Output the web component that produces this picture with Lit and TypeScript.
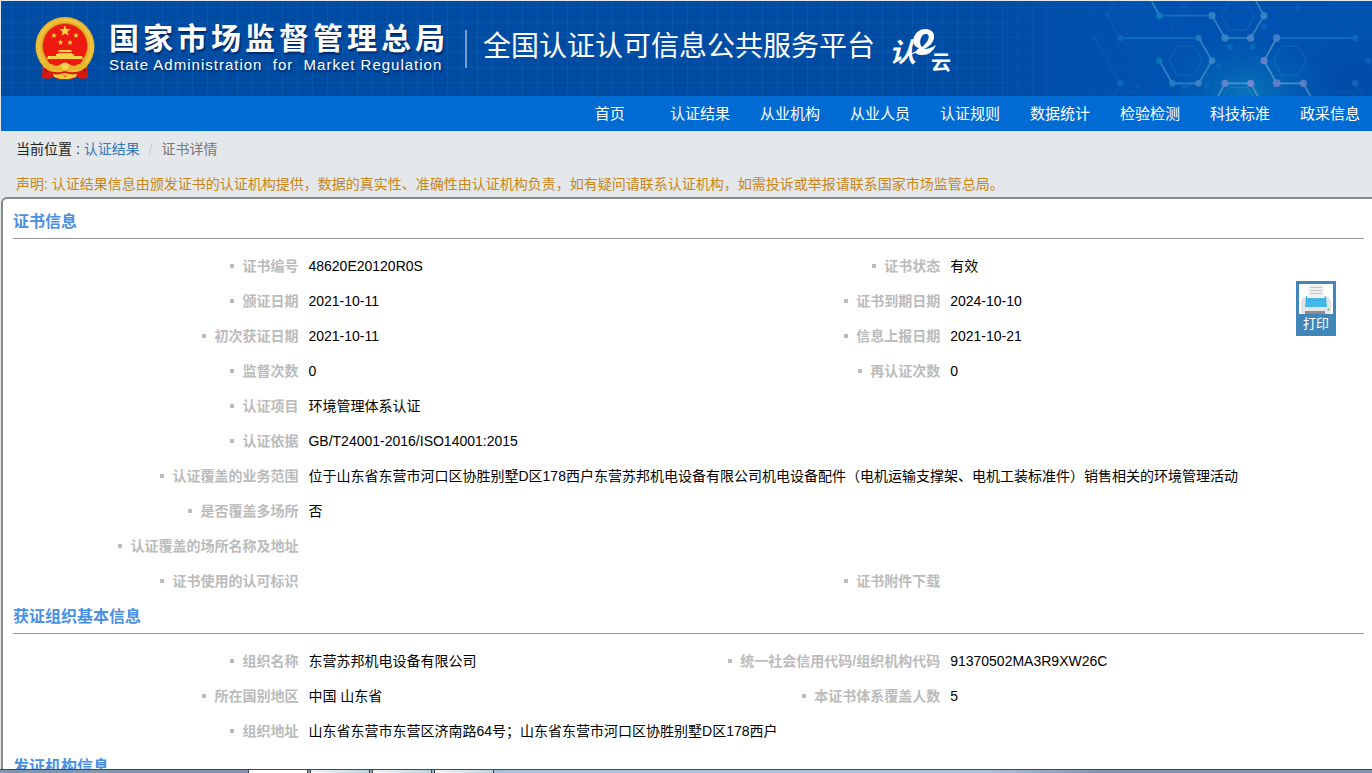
import { LitElement, html, css, svg, nothing } from "lit";
import { customElement, property } from "lit/decorators.js";

type Field = { label: string; value: string };
type Row = Field[];

const CERTIFICATE: Row[] = [
  [{ label: "证书编号", value: "48620E20120R0S" }, { label: "证书状态", value: "有效" }],
  [{ label: "颁证日期", value: "2021-10-11" }, { label: "证书到期日期", value: "2024-10-10" }],
  [{ label: "初次获证日期", value: "2021-10-11" }, { label: "信息上报日期", value: "2021-10-21" }],
  [{ label: "监督次数", value: "0" }, { label: "再认证次数", value: "0" }],
  [{ label: "认证项目", value: "环境管理体系认证" }],
  [{ label: "认证依据", value: "GB/T24001-2016/ISO14001:2015" }],
  [{ label: "认证覆盖的业务范围", value: "位于山东省东营市河口区协胜别墅D区178西户东营苏邦机电设备有限公司机电设备配件（电机运输支撑架、电机工装标准件）销售相关的环境管理活动" }],
  [{ label: "是否覆盖多场所", value: "否" }],
  [{ label: "认证覆盖的场所名称及地址", value: "" }],
  [{ label: "证书使用的认可标识", value: "" }, { label: "证书附件下载", value: "" }],
];

const ORGANISATION: Row[] = [
  [{ label: "组织名称", value: "东营苏邦机电设备有限公司" }, { label: "统一社会信用代码/组织机构代码", value: "91370502MA3R9XW26C" }],
  [{ label: "所在国别地区", value: "中国 山东省" }, { label: "本证书体系覆盖人数", value: "5" }],
  [{ label: "组织地址", value: "山东省东营市东营区济南路64号；山东省东营市河口区协胜别墅D区178西户" }],
];

const NAV = ["首页", "认证结果", "从业机构", "从业人员", "认证规则", "数据统计", "检验检测", "科技标准", "政采信息"];

const star = (cx: number, cy: number, r: number) => {
  const pts: string[] = [];
  for (let i = 0; i < 10; i++) {
    const a = (Math.PI / 5) * i - Math.PI / 2;
    const k = i % 2 ? r * 0.4 : r;
    pts.push(`${(cx + k * Math.cos(a)).toFixed(2)},${(cy + k * Math.sin(a)).toFixed(2)}`);
  }
  return svg`<polygon points=${pts.join(" ")} fill="#fbd93a"></polygon>`;
};

@customElement("site-header")
export class SiteHeader extends LitElement {
  static styles = css`
    :host { display: block; }
    .banner {
      position: relative;
      height: 95px;
      display: flex;
      align-items: center;
      color: #fff;
      overflow: hidden;
      background:
        repeating-linear-gradient(90deg, transparent 0 11px, rgba(20, 112, 205, .25) 11px 12px, transparent 12px 15px),
        repeating-linear-gradient(180deg, transparent 0 6px, rgba(20, 112, 205, .25) 6px 7px, transparent 7px 15px),
        #004ca3;
    }
    .network { position: absolute; right: 0; top: 0; width: 392px; height: 95px; }
    .emblem { width: 60px; height: 64px; margin-left: 34px; flex: none; }
    .agency { margin-left: 14px; padding-bottom: 4px; text-shadow: 1px 2px 2px rgba(0, 20, 70, .7); flex: none; }
    .agency-cn { margin: 0; font-size: 30px; line-height: 36px; font-weight: 700; letter-spacing: 4px; white-space: nowrap; }
    .agency-en { margin: 0; font-size: 15px; line-height: 16px; letter-spacing: 1px; white-space: pre; }
    .divider { width: 2px; height: 38px; margin: 0 16px; background: #6f9fd0; flex: none; }
    .platform { margin: 0; padding-bottom: 4px; font-size: 28px; line-height: 40px; font-weight: 400; white-space: nowrap; }
    .cloud { width: 64px; height: 46px; margin: 6px 0 0 14px; flex: none; }
    .cloud text { font-family: "Noto Sans CJK SC", sans-serif; font-weight: 700; fill: #fff; }
    .nav { background: #006cd3; }
    .nav-list {
      display: flex; justify-content: flex-end; gap: 30px;
      margin: 0; padding: 1px 12px 0 0; list-style: none;
    }
    .nav-link {
      display: block; min-width: 60px; text-align: center; white-space: nowrap;
      font-size: 15px; line-height: 34px; color: #fff; text-decoration: none;
    }
  `;

  private network() {
    const nodes: [number, number, number, string][] = [
      [538, 44, 10, "#147cc0"], [696, 44, 11, "#3387c0"], [852, 44, 11, "#3b87c4"],
      [421, 111, 10, "#0a69bd"], [656, 111, 10, "#1c80c0"], [735, 111, 11, "#3a88c4"],
      [812, 111, 11, "#5385c8"], [890, 111, 11, "#4a84c8"], [1126, 111, 10, "#1468c0"],
      [538, 179, 10, "#087abc"], [696, 179, 10, "#4286c4"], [852, 179, 11, "#7084ca"],
      [421, 247, 10, "#0a69bd"], [577, 247, 10, "#267fc0"], [656, 247, 10, "#4684c4"],
      [735, 247, 11, "#6c86c8"], [812, 247, 11, "#8088cc"], [890, 247, 12, "#6b7fcc"],
      [970, 247, 11, "#6682c4"], [1126, 247, 10, "#1468c0"], [383, 44, 9, "#075abb"],
      [344, 111, 9, "#0757b5"], [1165, 179, 9, "#0b62bf"], [612, 16, 8, "#0759b5"],
      [955, 20, 9, "#075bb8"], [750, 138, 9, "#0a6abb"], [818, 138, 9, "#0a6abb"],
      [716, 196, 9, "#0a6abb"], [681, 255, 9, "#0a67b9"], [614, 255, 9, "#0a67b9"],
      [852, 78, 9, "#0a62b9"], [476, 255, 8, "#0859b2"], [578, 78, 8, "#0757b3"],
    ];
    const hex = (x: number, y: number, r: number, o: number) => {
      const p = [0, 1, 2, 3, 4, 5].map((i) =>
        `${(x + r * Math.cos((i * Math.PI) / 3)).toFixed(1)},${(y + r * Math.sin((i * Math.PI) / 3)).toFixed(1)}`);
      return svg`<polygon points=${p.join(" ")} stroke="#3fa9d8" stroke-opacity=${o} stroke-width="3"></polygon>`;
    };
    return svg`
      <defs>
        <linearGradient id="fade"><stop offset="0" stop-color="#0052b0" stop-opacity="0"/><stop offset=".4" stop-color="#0052b0"/></linearGradient>
        <radialGradient id="glow"><stop offset="0" stop-color="#0874b8"/><stop offset="1" stop-color="#0060b4" stop-opacity="0"/></radialGradient>
        <radialGradient id="shade"><stop offset="0" stop-color="#00479c"/><stop offset="1" stop-color="#00479c" stop-opacity="0"/></radialGradient>
      </defs>
      <rect width="1176" height="285" fill="url(#fade)"/>
      <ellipse cx="1130" cy="240" rx="170" ry="140" fill="url(#shade)" opacity=".5"/>
      <ellipse cx="800" cy="270" rx="250" ry="170" fill="url(#glow)"/>
      <g fill="none">
        ${hex(774, 44, 50, .22)}${hex(617, 179, 50, .22)}${hex(930, 179, 50, .25)}
        ${hex(774, 312, 60, .3)}${hex(1085, 44, 50, .1)}${hex(460, 44, 50, .08)}${hex(460, 315, 50, .12)}${hex(1095, 315, 50, .12)}
        <path d="M538 44H696 M421 111H656 M890 111H1126" stroke="#2292cc" stroke-opacity=".5" stroke-width="5"/>
        <path d="M515 0L538 44 M696 44L735 111H812L852 44L828 0 M656 111L696 179L656 247H577L538 179" stroke="#4aa6cc" stroke-opacity=".6" stroke-width="5"/>
        <path d="M890 111L852 179L890 247H970L994 290 M712 290L735 247H812L836 290" stroke="#74b0d0" stroke-opacity=".6" stroke-width="5"/>
        <path d="M400 0L383 44L421 111 M344 111L421 247L400 285 M1126 247L1150 290" stroke="#1b74c8" stroke-opacity=".4" stroke-width="3"/>
      </g>
      ${nodes.map(([x, y, r, c]) => svg`<circle cx=${x} cy=${y} r=${r} fill=${c} fill-opacity=".85"></circle>`)}`;
  }

  render() {
    return html`
      <header>
        <div class="banner">
          <svg class="network" viewBox="0 0 1176 285" preserveAspectRatio="none" aria-hidden="true">${this.network()}</svg>
          <svg class="emblem" viewBox="0 0 60 64" role="img" aria-label="国徽">
            <path d="M8 44L7 61L14 62L19 59L23 63H37L41 59L46 62L53 61L52 44Z" fill="#d8180f"/>
            <path d="M10 50L13 60M16 51L18 59M44 52L42 59M50 49L48 59" stroke="#8f0d0a" stroke-width="1.5"/>
            <circle cx="30" cy="29.500" r="29.500" fill="#e9b52c"/>
            <circle cx="30" cy="29.500" r="26.500" fill="none" stroke="#f3c846" stroke-width="2.500" stroke-dasharray="2 1"/>
            <circle cx="30" cy="29" r="22.500" fill="#ee1a12" stroke="#c98a18" stroke-width="1"/>
            ${star(30, 14, 6)}${star(19, 18.5, 3)}${star(41, 18.5, 3)}${star(25.5, 25.5, 3)}${star(35, 25.5, 3)}
            <path d="M24 33H36L37 35H23Z M23 36H37V37H39V39H21V37H23Z" fill="#fbd33c"/>
            <path d="M13 39H47L48 42H12Z" fill="#f7d144"/>
            <path d="M12 43H48L45 47H15Z" fill="#ee1a12"/>
            <path d="M9 45Q17 51 24 48Q30 44 36 48Q43 51 51 45L52 50Q42 55 36 52L30 55L24 52Q18 55 8 50Z" fill="#e9b52c"/>
            <circle cx="30" cy="49" r="3.500" fill="#f8d558"/>
            <path d="M12 53Q21 57 30 54Q39 57 48 53L51 60L43 61Q39 57 30 56Q21 57 17 61L9 60Z" fill="#d8180f"/>
            <path d="M18 57L27 58L30 60L33 58L42 57L41 60L34 62H26L19 60Z" fill="#f3ca3e"/>
          </svg>
          <div class="agency">
            <p class="agency-cn">国家市场监督管理总局</p>
            <p class="agency-en">State Administration  for  Market Regulation</p>
          </div>
          <span class="divider"></span>
          <h1 class="platform">全国认证认可信息公共服务平台</h1>
          <svg class="cloud" viewBox="0 0 64 46" role="img" aria-label="认e云">
            <text x="0" y="33" font-size="27" font-style="italic">认</text>
            <path fill-rule="evenodd" d="M36 0C44 0 47 6 44 12C42 16 39 18 35 20Q41 20 47 16Q43 26 33 26Q28 26 27 24L20 26Q24 24 27 22L30 19C25 18 23 13 25 8C27 3 31 0 36 0ZM36 5C32 6 30 12 32 17C33 18 34 18 35 16C40 12 42 4 36 5Z" fill="#fff"/>
            <text x="42" y="41" font-size="20">云</text>
          </svg>
        </div>
        <nav class="nav" aria-label="主导航">
          <ul class="nav-list">
            ${NAV.map((n) => html`<li><a class="nav-link" href="#">${n}</a></li>`)}
          </ul>
        </nav>
      </header>`;
  }
}

@customElement("info-section")
export class InfoSection extends LitElement {
  static styles = css`
    :host { display: block; }
    .title {
      margin: 0; padding-top: 2px; font-size: 16px; line-height: 32px; font-weight: 700; color: #4a90e2;
      border-bottom: 1px solid #999;
    }
    .table {
      width: 100%; margin-top: 10px; table-layout: fixed; border-collapse: collapse;
      font-size: 14px; line-height: 25px; color: #000;
    }
    .col-label { width: 21.5%; }
    .col-value { width: 26%; }
    .label, .value { height: 25px; padding: 5px; vertical-align: top; white-space: nowrap; }
    .label { text-align: right; font-weight: 700; color: #bbb; }
    .label::before {
      content: ""; display: inline-block; width: 4px; height: 4px;
      margin: 0 8px 2px 0; vertical-align: middle; background: #bbb;
    }
    .value { text-align: left; }
    .wide { white-space: normal; }
  `;

  @property() heading = "";
  @property({ attribute: false }) rows: Row[] = [];

  render() {
    return html`
      <section>
        <h2 class="title">${this.heading}</h2>
        ${this.rows.length
          ? html`<table class="table">
              <colgroup><col class="col-label" /><col class="col-value" /><col class="col-label" /><col /></colgroup>
              <tbody>
                ${this.rows.map((row) => html`<tr>
                  ${row.map((f) => html`<th class="label" scope="row">${f.label}</th>
                    <td class="value ${row.length === 1 ? "wide" : ""}" colspan=${row.length === 1 ? 3 : 1}>${f.value}</td>`)}
                </tr>`)}
              </tbody>
            </table>`
          : nothing}
      </section>`;
  }
}

@customElement("app-root")
export class AppRoot extends LitElement {
  static styles = css`
    :host {
      display: flex; flex-direction: column; height: 100vh; overflow: hidden;
      background: #e4e8eb;
      font-family: "Liberation Sans", "Noto Sans CJK SC", sans-serif;
    }
    .page { flex: 1; min-height: 0; overflow: hidden; padding: 1px 0 0 1px; }
    .crumbs { padding: 0 15px; font-size: 14px; line-height: 36px; color: #222; }
    .crumb-link { color: #337ab7; text-decoration: none; }
    .slash { padding: 0 9px; color: #ccc; }
    .current { color: #777; }
    .notice { margin: 0; padding: 4px 15px 0; font-size: 14px; line-height: 26px; color: #c7861a; }
    .panel {
      position: relative; padding: 5px 8px 40px 10px; background: #fff;
      border: 2px solid #888; border-right: 0; border-radius: 6px 0 0 0;
    }
    .print {
      position: absolute; top: 82px; right: 36px; width: 40px; padding: 3px; border: 0;
      background: #4086b9; color: #fff; font: inherit; font-size: 13px; line-height: 19px; cursor: pointer;
    }
    .printer { display: block; width: 34px; height: 30px; background: #fff; }
    .taskbar {
      flex: none; height: 4px; box-sizing: border-box; display: flex; gap: 2px; padding-left: 248px;
      border-top: 1px solid #3c4a52;
      background: linear-gradient(90deg, #7f96b0 0 20%, #a6c3de 37% 72%, #7f96b0 80%);
    }
    .task {
      width: 60px; box-sizing: border-box; border: 1px solid #33444f; border-width: 0 1px;
      background: linear-gradient(90deg, #f0f6fa, #bdd3e2);
    }
    .task:first-child { background: #fdfdfd; }
  `;

  render() {
    return html`
      <div class="page">
        <site-header></site-header>
        <div class="crumbs">当前位置 : <a class="crumb-link" href="#">认证结果</a><span class="slash">/</span><span class="current">证书详情</span></div>
        <p class="notice">声明: 认证结果信息由颁发证书的认证机构提供，数据的真实性、准确性由认证机构负责，如有疑问请联系认证机构，如需投诉或举报请联系国家市场监管总局。</p>
        <main class="panel">
          <info-section heading="证书信息" .rows=${CERTIFICATE}></info-section>
          <info-section heading="获证组织基本信息" .rows=${ORGANISATION}></info-section>
          <info-section heading="发证机构信息"></info-section>
          <button class="print" type="button">
            <svg class="printer" viewBox="0 0 34 30" aria-hidden="true">
              <path d="M4 13H30L32 18V27Q32 30 29 30H5Q2 30 2 27V18Z" fill="#e3e4e5"/>
              <path d="M7 12H27L28 23H6Z" fill="#45b8ea"/>
              <path d="M7 16.500H27" stroke="#2aa3da" stroke-width="1" stroke-dasharray="1 1"/>
              <path d="M10 1H24L26 14H8Z" fill="#f0f0f0"/>
              <path d="M11 3.500H23M11 6.500H23M11 9.500H23" stroke="#c4c4c8" stroke-width="1"/>
              <path d="M6 27H26V30H6Z" fill="#8c8c8c"/>
              <circle cx="29.500" cy="25.500" r="1" fill="#5bc06a"/>
            </svg>
            打印
          </button>
        </main>
      </div>
      <div class="taskbar" aria-hidden="true">
        <span class="task"></span><span class="task"></span><span class="task"></span><span class="task"></span>
      </div>`;
  }
}
